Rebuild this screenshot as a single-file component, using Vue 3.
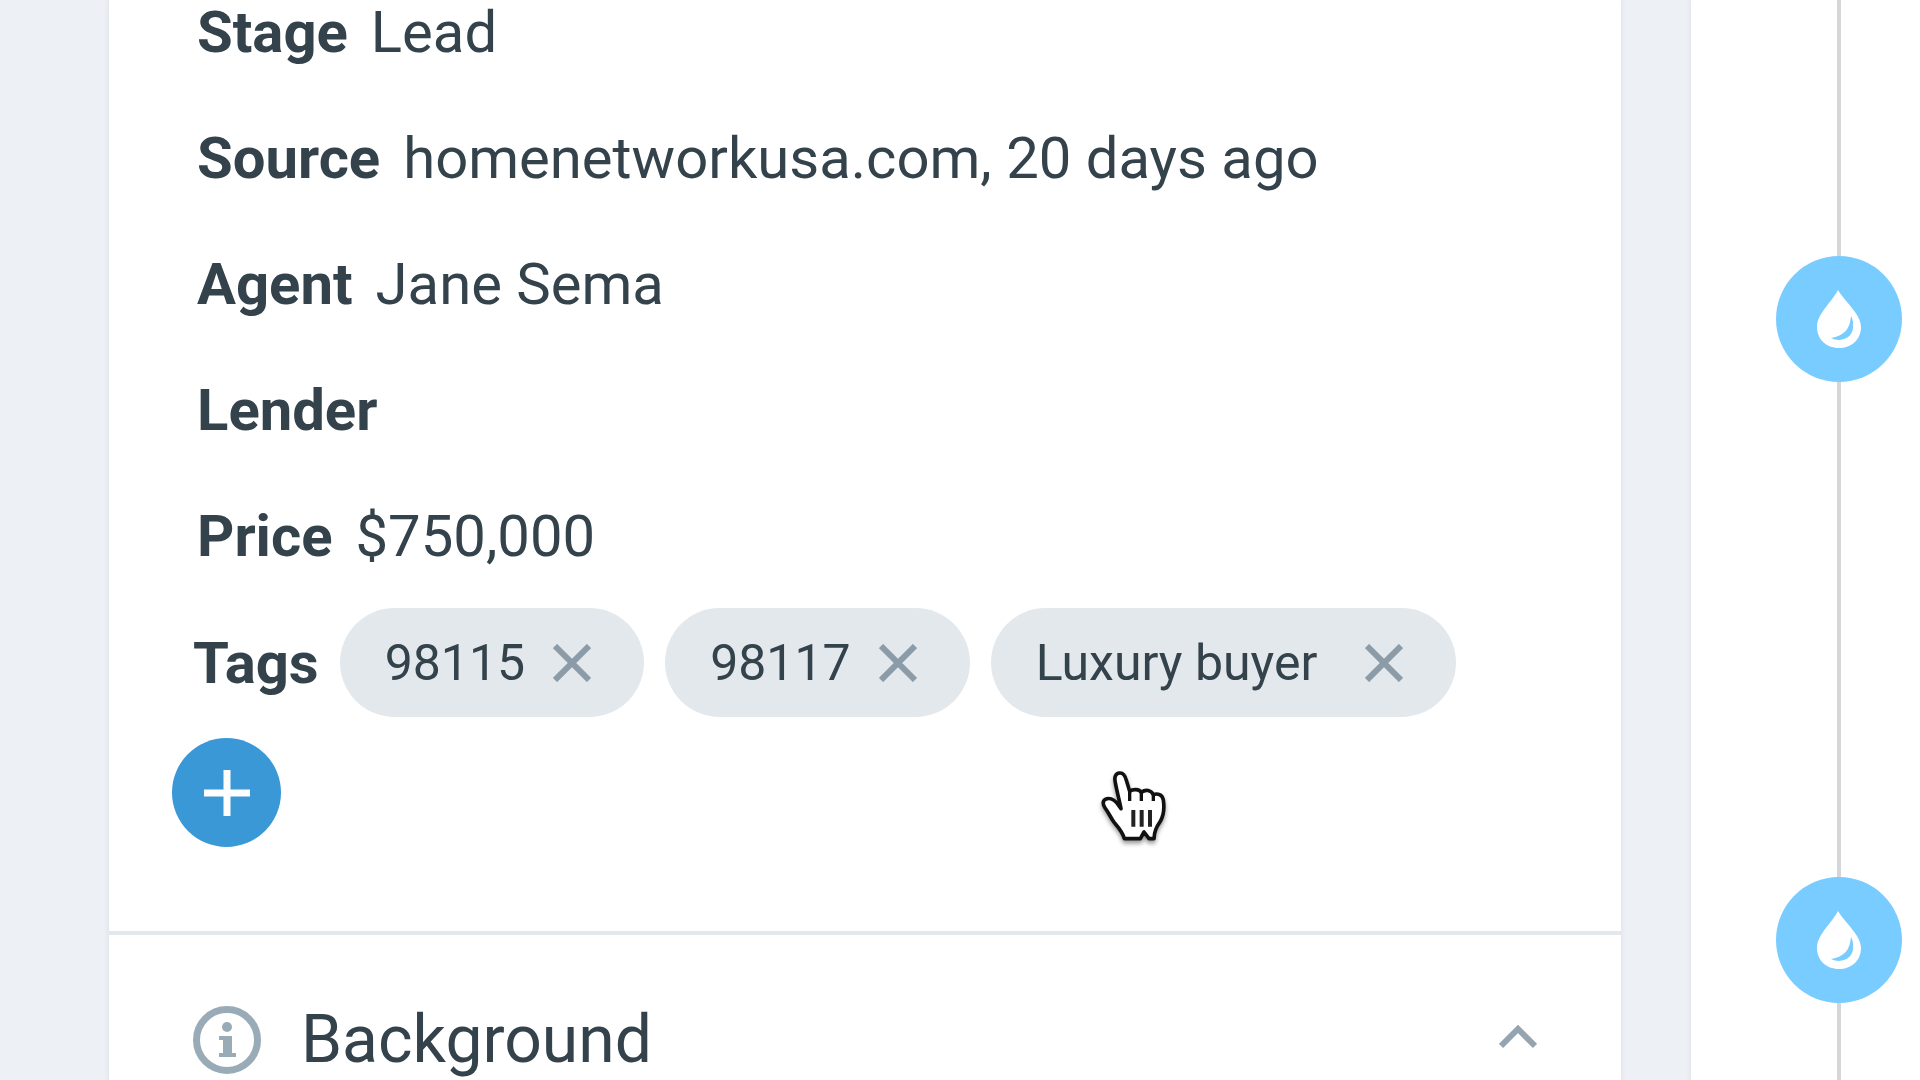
<script setup>
import { ref } from 'vue'

const fields = [
  { label: 'Stage', value: 'Lead' },
  { label: 'Source', value: 'homenetworkusa.com, 20 days ago' },
  { label: 'Agent', value: 'Jane Sema' },
  { label: 'Lender', value: '' },
  { label: 'Price', value: '$750,000' },
]

const tags = ref([
  { name: '98115', zip: true },
  { name: '98117', zip: true },
  { name: 'Luxury buyer', zip: false },
])

const events = [1, 2]

function removeTag(tag) {
  tags.value = tags.value.filter((t) => t !== tag)
}
</script>

<template>
  <div class="page">
    <main class="panel">
      <section class="details">
        <dl class="fields">
          <div v-for="field in fields" :key="field.label" class="field">
            <dt>{{ field.label }}</dt>
            <dd>{{ field.value }}</dd>
          </div>
        </dl>
        <div class="tags">
          <strong class="tags-label">Tags</strong>
          <span v-for="tag in tags" :key="tag.name" class="tag" :class="{ zip: tag.zip }">
            {{ tag.name }}
            <button type="button" class="remove" :aria-label="'Remove ' + tag.name" @click="removeTag(tag)">
              <svg viewBox="0 0 38 38" width="38" height="38" aria-hidden="true">
                <path d="M2 2 36 36M36 2 2 36" fill="none" stroke="#8b9ca8" stroke-width="6" />
              </svg>
            </button>
          </span>
          <button type="button" class="add" aria-label="Add tag">
            <svg viewBox="0 0 46 46" width="46" height="46" aria-hidden="true">
              <path d="M23 0V46M0 23H46" fill="none" stroke="#fff" stroke-width="7" />
            </svg>
          </button>
        </div>
      </section>

      <section class="background">
        <svg class="info" viewBox="0 0 68 68" width="68" height="68" aria-hidden="true">
          <circle cx="34" cy="34" r="30.5" fill="none" stroke="#9aabb8" stroke-width="7" />
          <circle cx="34" cy="21" r="5" fill="#9aabb8" />
          <path d="M26 30H39V47H43V51H26V47H30V34H26Z" fill="#9aabb8" />
        </svg>
        <h2>Background</h2>
        <button type="button" class="toggle" aria-label="Collapse background">
          <svg viewBox="0 0 38 30" width="38" height="30" aria-hidden="true">
            <path d="M2 21 19 4 36 21" fill="none" stroke="#94a5b1" stroke-width="6" />
          </svg>
        </button>
      </section>

      <svg class="pointer" viewBox="0 0 330 330" width="110" height="110" aria-hidden="true">
        <path
          d="M133 266C128 246 116 233 103 218C92 204 87 189 76 175C68 164 67 153 76 148C87 142 101 148 110 158L123 176C119 154 110 122 106 98C102 80 107 70 119 69C131 68 136 79 139 91L149 124C160 116 177 117 184 127C197 117 213 120 220 134C233 129 247 134 250 150C254 178 251 197 241 214C229 232 223 243 222 266H207L192 246L181 266Z"
          fill="#fff" stroke="#111" stroke-width="11" stroke-linejoin="round"
        />
        <path d="M149 124V153M184 127V153M220 134V153" stroke="#111" stroke-width="10" />
        <path d="M160 180V230M185 180V230M210 180V230" stroke="#222" stroke-width="12" />
      </svg>
    </main>

    <aside class="timeline">
      <ol>
        <li v-for="event in events" :key="event">
          <span class="drop">
            <svg viewBox="0 0 46 60" width="46" height="60" aria-hidden="true">
              <path d="M22 1C29 13 45 25 45 38C45 51 35 59 23 59C10 59 1 50 1 38C1 25 15 14 22 1Z" fill="#fff" />
              <path d="M35 27C34 40 28 47 15 49C25 54 39 49 37 34C37 31 36 29 35 27Z" fill="#79ccff" />
            </svg>
          </span>
        </li>
      </ol>
    </aside>
  </div>
</template>

<style>
body {
  margin: 0;
}
</style>

<style scoped>
.page {
  display: flex;
  gap: 70px;
  min-height: 100vh;
  padding-left: 109px;
  box-sizing: border-box;
  background: #edf0f5;
  color: #33424b;
  font-family: Roboto, "Liberation Sans", sans-serif;
  font-size: 58px;
  line-height: 64px;
}

.panel {
  position: relative;
  flex: 1;
  min-width: 0;
  background: #fff;
  box-shadow: 0 0 5px 1px #dfe4e9;
}

.details {
  padding: 0 84px 84px 63px;
  border-bottom: 4px solid #e3e8ec;
}

.fields {
  display: flex;
  flex-direction: column;
  gap: 62px;
  margin: 0;
  padding-left: 25px;
}

.field {
  display: flex;
  gap: 23px;
}

dt,
.tags-label {
  font-weight: 700;
}

dd {
  margin: 0;
}

.tags {
  display: flex;
  flex-wrap: wrap;
  align-items: center;
  gap: 21px;
  margin-top: 40px;
}

.tags-label {
  padding-left: 21px;
}

.tag {
  display: flex;
  align-items: center;
  gap: 48px;
  height: 109px;
  padding: 0 53px 0 45px;
  box-sizing: border-box;
  border-radius: 55px;
  background: #e3e8ec;
  font-size: 50px;
}

.tag.zip {
  gap: 28px;
}

button {
  display: flex;
  align-items: center;
  justify-content: center;
  padding: 0;
  border: 0;
  background: none;
  cursor: pointer;
}

.add {
  width: 109px;
  height: 109px;
  border-radius: 50%;
  background: #3998d5;
}

.background {
  display: flex;
  align-items: center;
  padding: 71px 84px 6px;
}

h2 {
  margin: 0 auto 0 40px;
  font-size: 66px;
  font-weight: 400;
}

.pointer {
  position: absolute;
  top: 750px;
  left: 971px;
  filter: drop-shadow(0 3px 2px rgba(0, 0, 0, 0.4));
}

.timeline {
  flex: 0 0 229px;
  background: #fff;
  box-shadow: 0 0 5px 1px #dfe4e9;
}

ol {
  display: flex;
  flex-direction: column;
  height: 100%;
  margin: 0 0 0 85px;
  padding: 0;
  list-style: none;
}

li {
  display: flex;
  flex-direction: column;
  align-items: center;
  width: 126px;
}

li::before {
  width: 4px;
  height: 495px;
  background: #d3d7d9;
  content: "";
}

li:first-child::before {
  height: 256px;
}

li:last-child {
  flex: 1;
}

li:last-child::after {
  flex: 1;
  width: 4px;
  background: #d3d7d9;
  content: "";
}

.drop {
  display: flex;
  align-items: center;
  justify-content: center;
  width: 126px;
  height: 126px;
  border-radius: 50%;
  background: #79ccff;
}
</style>
